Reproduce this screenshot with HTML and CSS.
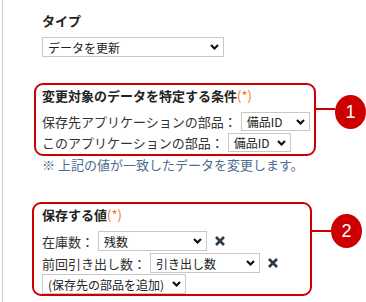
FILE: index.html
```html
<!DOCTYPE html>
<html lang="ja">

<head>
  <meta charset="UTF-8">
  <title>データを更新</title>
  <link rel="stylesheet" href="styles.css">
</head>

<body>
  <div class="frame">
    <div class="label">タイプ</div>
    <div class="sel">
      <select class="w-type"><option>データを更新</option></select>
      <svg width="9" height="6" viewBox="0 0 9 6"><path d="M1 1 L4.5 4.5 L8 1" /></svg>
    </div>

    <div class="callout callout-1">
      <div class="box box-1">
        <div class="box-title">変更対象のデータを特定する条件<span class="req">(*)</span></div>
        <div class="row row-sm">
          <span>保存先アプリケーションの部品：</span>
          <div class="sel">
            <select class="w-id1"><option>備品ID</option></select>
            <svg width="9" height="6" viewBox="0 0 9 6"><path d="M1 1 L4.5 4.5 L8 1" /></svg>
          </div>
        </div>
        <div class="row row-sm">
          <span>このアプリケーションの部品：</span>
          <div class="sel">
            <select class="w-id2"><option>備品ID</option></select>
            <svg width="9" height="6" viewBox="0 0 9 6"><path d="M1 1 L4.5 4.5 L8 1" /></svg>
          </div>
        </div>
      </div>
      <span class="link"></span>
      <span class="badge">1</span>
    </div>
    <p class="hint">※ 上記の値が一致したデータを変更します。</p>

    <div class="callout callout-2">
      <div class="box box-2">
        <div class="box-title">保存する値<span class="req">(*)</span></div>
        <div class="row">
          <span>在庫数：</span>
          <div class="sel">
            <select class="w-stock"><option>残数</option></select>
            <svg width="9" height="6" viewBox="0 0 9 6"><path d="M1 1 L4.5 4.5 L8 1" /></svg>
          </div>
          <svg class="del" width="10" height="10" viewBox="0 0 10 10"><path d="M1 1 L9 9 M9 1 L1 9" /></svg>
        </div>
        <div class="row">
          <span>前回引き出し数：</span>
          <div class="sel">
            <select class="w-last"><option>引き出し数</option></select>
            <svg width="9" height="6" viewBox="0 0 9 6"><path d="M1 1 L4.5 4.5 L8 1" /></svg>
          </div>
          <svg class="del" width="10" height="10" viewBox="0 0 10 10"><path d="M1 1 L9 9 M9 1 L1 9" /></svg>
        </div>
        <div class="row row-last">
          <div class="sel">
            <select class="w-add"><option>(保存先の部品を追加)</option></select>
            <svg width="9" height="6" viewBox="0 0 9 6"><path d="M1 1 L4.5 4.5 L8 1" /></svg>
          </div>
        </div>
      </div>
      <span class="link"></span>
      <span class="badge">2</span>
    </div>
  </div>
</body>

</html>
```

FILE: styles.css
```css
* {
  box-sizing: border-box;
}

body {
  margin: 0;
  font-family: "Noto Sans CJK JP", sans-serif;
  font-size: 13px;
  color: #333;
  background-color: white;
}

.frame {
  margin-left: 2px;
  border-left: 1px solid #ccc;
  height: 302px;
  padding: 11px 0 0 39px;
}

.label {
  font-weight: bold;
  line-height: 20px;
  color: #222;
  margin-bottom: 6px;
}

.sel {
  position: relative;
  display: inline-block;
  line-height: 0;
}

.sel select {
  appearance: none;
  height: 20px;
  border: 1px solid #c8c8c8;
  border-radius: 0;
  background-color: white;
  font-family: "Noto Sans CJK JP", sans-serif;
  font-size: 12px;
  color: #222;
  padding: 0 16px 0 5px;
  margin: 0;
}

.sel svg {
  position: absolute;
  right: 5px;
  top: 7px;
  pointer-events: none;
}

.sel svg path {
  fill: none;
  stroke: #111;
  stroke-width: 2.2;
}

.w-type { width: 182px; }
.w-id1 { width: 69px; }
.w-id2 { width: 63px; }
.w-stock { width: 109px; }
.w-last { width: 110px; }
.w-add { width: 144px; }

.callout {
  display: flex;
  align-items: flex-start;
}

.callout-1 {
  margin-top: 26px;
}

.callout-2 {
  margin-top: 28px;
}

.box {
  border: 2px solid #c00;
  border-radius: 9px;
}

.box-1 {
  width: 282px;
  margin-left: -8px;
  padding: 0 0 1px 6px;
}

.box-2 {
  width: 280px;
  height: 94px;
  margin-left: -10px;
  padding: 0 0 0 8px;
}

.box-title {
  font-weight: bold;
  color: #222;
  line-height: 22px;
  margin-bottom: 4px;
}

.req {
  font-weight: normal;
  color: #f7731c;
}

.row {
  display: flex;
  align-items: center;
  gap: 4px;
  height: 22px;
}

.row-sm {
  height: 20px;
  margin-bottom: 1px;
}

.row-sm select {
  height: 19px;
}

.row-last {
  height: 20px;
}

.del {
  margin-left: 4px;
}

.del path {
  stroke: #2c3a48;
  stroke-width: 2.6;
}

.link {
  width: 19px;
  height: 2px;
  margin-top: 25px;
  background-color: #c00;
  flex-shrink: 0;
}

.callout-2 .link {
  margin-top: 28px;
}

.badge {
  width: 31px;
  height: 34px;
  margin-top: 12px;
  border-radius: 50%;
  background-color: #c00;
  color: white;
  font-family: "Liberation Sans", sans-serif;
  font-size: 18px;
  display: flex;
  align-items: center;
  justify-content: center;
  flex-shrink: 0;
}

.hint {
  margin: 0;
  line-height: 18px;
  color: #4d6d91;
}
```
